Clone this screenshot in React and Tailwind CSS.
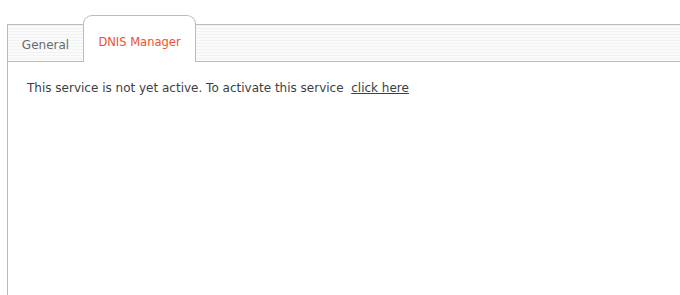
import React from "react";

const stripes = "bg-[repeating-linear-gradient(to_bottom,#f1f3f3_0px,#f1f3f3_1px,#fbfbfb_1px,#fbfbfb_3px)]";

export default function App() {
  return (
    <div className="w-[680px] h-[295px] bg-white overflow-hidden font-['DejaVu_Sans',sans-serif]">
      <div className="h-[62px] pt-[15px] pl-[7px] flex items-start">
        <div className={`h-[38px] w-[77px] mt-[9px] border border-[#b9bdbd] ${stripes} flex items-center justify-center text-[12px] text-[#666a70] pt-[4px]`}>
          General
        </div>
        <div className="h-[47px] w-[113px] border border-b-0 border-[#b9bdbd] rounded-t-[9px] bg-white flex items-center justify-center text-[11.5px] text-[#f0502f] -ml-px pt-[7px]">
          DNIS Manager
        </div>
        <div className={`flex-1 h-[38px] mt-[9px] border border-r-0 border-[#b9bdbd] ${stripes} -ml-px`} />
      </div>
      <div className="ml-[7px] border-l border-[#b9bdbd] h-[233px] pl-[19px] pt-[17px] text-[12px] text-[#3c3f44]">
        This service is not yet active. To activate this service&nbsp;&nbsp;<span className="underline cursor-pointer">click here</span>
      </div>
    </div>
  );
}
